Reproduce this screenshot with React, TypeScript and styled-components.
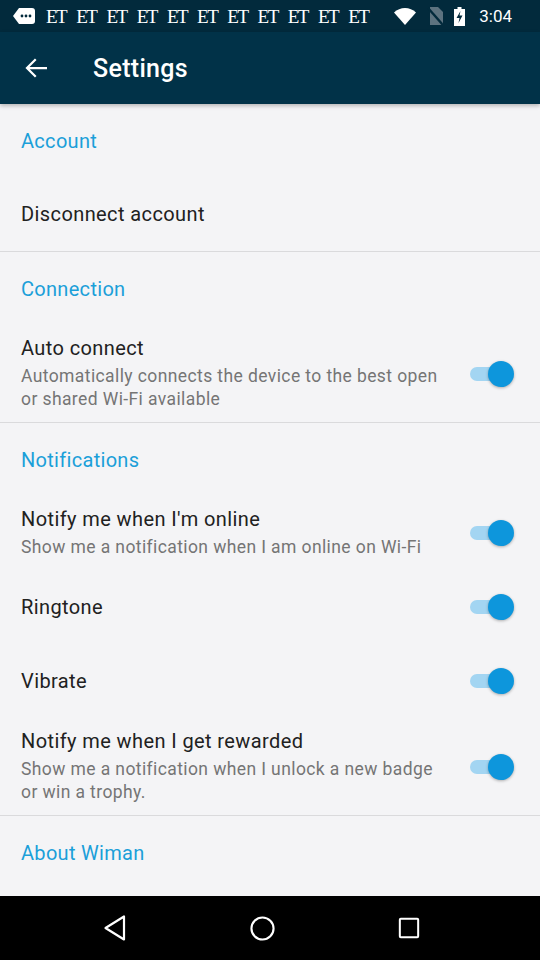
import styled, { createGlobalStyle } from 'styled-components';

interface Setting {
  title: string;
  subtitle?: string;
  toggle?: boolean;
}

interface Section {
  header: string;
  items: Setting[];
}

const sections: Section[] = [
  { header: 'Account', items: [{ title: 'Disconnect account' }] },
  {
    header: 'Connection',
    items: [
      {
        title: 'Auto connect',
        subtitle: 'Automatically connects the device to the best open or shared Wi-Fi available',
        toggle: true,
      },
    ],
  },
  {
    header: 'Notifications',
    items: [
      {
        title: "Notify me when I'm online",
        subtitle: 'Show me a notification when I am online on Wi-Fi',
        toggle: true,
      },
      { title: 'Ringtone', toggle: true },
      { title: 'Vibrate', toggle: true },
      {
        title: 'Notify me when I get rewarded',
        subtitle: 'Show me a notification when I unlock a new badge or win a trophy.',
        toggle: true,
      },
    ],
  },
  { header: 'About Wiman', items: [] },
];

const App = () => (
  <>
    <GlobalStyle />
    <Page>
      <StatusBar>
        <StatusLeft>
          <MessageIcon viewBox="0 0 22 16">
            <path d="M6 0h13a3 3 0 0 1 3 3v10a3 3 0 0 1-3 3H6L0 8z" fill="#fff" />
            <circle cx="9" cy="8" r="1.4" fill="#022a3c" />
            <circle cx="13" cy="8" r="1.4" fill="#022a3c" />
            <circle cx="17" cy="8" r="1.4" fill="#022a3c" />
          </MessageIcon>
          {Array.from({ length: 11 }).map((_, i) => (
            <Carrier key={i}>ET</Carrier>
          ))}
        </StatusLeft>
        <StatusRight>
          <svg width="22" height="17" viewBox="0 0 22 17">
            <path d="M0 4.5C6-1.5 16-1.5 22 4.5L11 17z" fill="#fff" />
          </svg>
          <svg width="16" height="18" viewBox="0 0 16 18">
            <path d="M3 0h8l5 5v13H3z" fill="#5d7380" />
            <path d="M1 1l15 17" stroke="#022a3c" strokeWidth="2.4" />
          </svg>
          <svg width="11" height="19" viewBox="0 0 11 19">
            <path d="M3.5 0h4v2H11v17H0V2h3.5z" fill="#fff" />
            <path d="M6.5 4L2.5 11h3l-1 5 4-7.5h-3z" fill="#022a3c" />
          </svg>
          <Clock>3:04</Clock>
        </StatusRight>
      </StatusBar>
      <AppBar>
        <BackButton>
          <svg width="30" height="30" viewBox="0 0 24 24">
            <path d="M20 12H4.5M11 5l-7 7 7 7" fill="none" stroke="#fff" strokeWidth="1.8" />
          </svg>
        </BackButton>
        <Title>Settings</Title>
      </AppBar>
      <Content>
        {sections.map((section, i) => (
          <SectionBlock key={section.header} divided={i > 0}>
            <SectionHeader>{section.header}</SectionHeader>
            {section.items.map((item) => (
              <Row key={item.title}>
                <RowText>
                  <RowTitle>{item.title}</RowTitle>
                  {item.subtitle && <RowSubtitle>{item.subtitle}</RowSubtitle>}
                </RowText>
                {item.toggle && (
                  <Switch>
                    <Track />
                    <Thumb />
                  </Switch>
                )}
              </Row>
            ))}
          </SectionBlock>
        ))}
      </Content>
      <NavBar>
        <svg width="24" height="28" viewBox="0 0 24 28">
          <path d="M21 2.5v23L2.5 14z" fill="none" stroke="#fff" strokeWidth="2.2" strokeLinejoin="round" />
        </svg>
        <svg width="25" height="25" viewBox="0 0 26 26">
          <circle cx="13" cy="13" r="11.5" fill="none" stroke="#fff" strokeWidth="2.2" />
        </svg>
        <svg width="22" height="22" viewBox="0 0 24 24">
          <rect x="2" y="2" width="20" height="20" rx="1" fill="none" stroke="#fff" strokeWidth="2.2" />
        </svg>
      </NavBar>
    </Page>
  </>
);

export default App;

const GlobalStyle = createGlobalStyle`
  html, body {
    margin: 0;
    padding: 0;
    background: #f4f4f6;
    font-family: Roboto, "Noto Sans", sans-serif;
  }
`;

const Page = styled.div`
  width: 540px;
  height: 960px;
  display: flex;
  flex-direction: column;
  overflow: hidden;
  background: #f4f4f6;
`;

const StatusBar = styled.div`
  height: 32px;
  flex-shrink: 0;
  background: #022a3c;
  display: flex;
  align-items: center;
  justify-content: space-between;
  padding: 0 28px 0 13px;
`;

const StatusLeft = styled.div`
  display: flex;
  align-items: center;
  gap: 10px;
`;

const MessageIcon = styled.svg`
  width: 22px;
  height: 16px;
  margin-right: 1px;
`;

const Carrier = styled.span`
  font-family: "Liberation Serif", "DejaVu Serif", serif;
  font-size: 19px;
  color: #fff;
  letter-spacing: -1.5px;
  line-height: 1;
`;

const StatusRight = styled.div`
  display: flex;
  align-items: center;
  gap: 11px;
`;

const Clock = styled.span`
  color: #fff;
  font-size: 17px;
  margin-left: 3px;
`;

const AppBar = styled.header`
  height: 72px;
  flex-shrink: 0;
  background: #013248;
  display: flex;
  align-items: center;
  box-shadow: 0 2px 4px rgba(0, 0, 0, 0.25);
  position: relative;
  z-index: 1;
`;

const BackButton = styled.div`
  width: 74px;
  display: flex;
  justify-content: center;
`;

const Title = styled.h1`
  margin: 0 0 0 19px;
  color: #fff;
  font-size: 25px;
  font-weight: 500;
  letter-spacing: 0.3px;
`;

const Content = styled.main`
  flex: 1;
  display: flex;
  flex-direction: column;
`;

const SectionBlock = styled.section<{ divided?: boolean }>`
  border-top: ${({ divided }) => (divided ? '1px solid #dadadc' : 'none')};
`;

const SectionHeader = styled.div`
  height: 73px;
  display: flex;
  align-items: center;
  padding: 0 21px;
  color: #1b9fd9;
  font-size: 20px;
  letter-spacing: 0.3px;
`;

const Row = styled.div`
  min-height: 74px;
  box-sizing: border-box;
  padding: 11px 26px 11px 21px;
  display: flex;
  align-items: center;
  gap: 26px;
`;

const RowText = styled.div`
  flex: 1;
  display: flex;
  flex-direction: column;
  gap: 5px;
`;

const RowTitle = styled.div`
  font-size: 20px;
  line-height: 24px;
  letter-spacing: 0.4px;
  color: #212121;
`;

const RowSubtitle = styled.div`
  font-size: 17.5px;
  line-height: 23px;
  letter-spacing: 0.4px;
  color: #757575;
`;

const Switch = styled.div`
  position: relative;
  width: 44px;
  height: 26px;
  flex-shrink: 0;
`;

const Track = styled.div`
  position: absolute;
  left: 0;
  right: 6px;
  top: 6px;
  height: 14px;
  border-radius: 7px;
  background: #a3d5f2;
`;

const Thumb = styled.div`
  position: absolute;
  right: 0;
  top: 0;
  width: 26px;
  height: 26px;
  border-radius: 50%;
  background: #0d96dc;
  box-shadow: 0 1px 3px rgba(0, 0, 0, 0.3);
`;

const NavBar = styled.nav`
  height: 64px;
  flex-shrink: 0;
  background: #000;
  display: flex;
  align-items: center;
  justify-content: space-between;
  padding: 0 120px 0 103px;
`;
